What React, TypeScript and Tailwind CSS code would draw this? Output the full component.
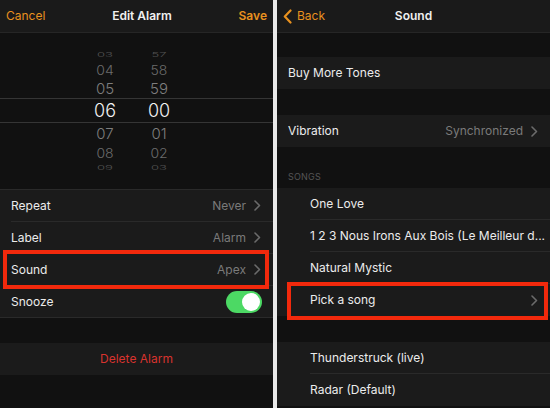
import React from 'react';

const font = { fontFamily: 'Inter, "Noto Sans", sans-serif' };

const Chevron: React.FC<{ color?: string }> = ({ color = '#6b6b6b' }) => (
  <svg width="7" height="11" viewBox="0 0 7 11" className="ml-[8px]">
    <path d="M1 1l4.5 4.5L1 10" fill="none" stroke={color} strokeWidth="1.6" strokeLinecap="round" strokeLinejoin="round" />
  </svg>
);

const Row: React.FC<{
  label: string;
  value?: string;
  chevron?: boolean;
  indent?: string;
  last?: boolean;
  children?: React.ReactNode;
}> = ({ label, value, chevron, indent = 'pl-[11px]', last, children }) => (
  <div className={`relative h-[32px] bg-[#1b1b1b] ${indent}`}>
    <div className={`flex h-full items-center pr-[12px] ${last ? '' : 'border-b border-[#2a2a2a]'}`}>
      <span className="flex-1 whitespace-nowrap text-[12px] text-[#ececec]">{label}</span>
      {value && <span className="text-[12px] text-[#7a7a7a]">{value}</span>}
      {chevron && <Chevron />}
    </div>
    {children}
  </div>
);

const wheel = [
  { h: 'h-[12px]', size: 'text-[13px] scale-y-50', color: 'text-[#525252]', hr: '03', mn: '57' },
  { h: 'h-[19px]', size: 'text-[14px] scale-y-90', color: 'text-[#6c6c6c]', hr: '04', mn: '58' },
  { h: 'h-[19px]', size: 'text-[15px]', color: 'text-[#7e7e7e]', hr: '05', mn: '59' },
  { h: 'h-[25px] border-y border-[#353535]', size: 'text-[18px]', color: 'text-[#f2f2f2]', hr: '06', mn: '00' },
  { h: 'h-[21px]', size: 'text-[15px]', color: 'text-[#7e7e7e]', hr: '07', mn: '01' },
  { h: 'h-[19px]', size: 'text-[14px] scale-y-90', color: 'text-[#6c6c6c]', hr: '08', mn: '02' },
  { h: 'h-[9px]', size: 'text-[13px] scale-y-50', color: 'text-[#525252]', hr: '09', mn: '03' },
];

const EditAlarm: React.FC = () => (
  <div className="flex w-[273px] flex-col bg-[#111111]">
    <div className="flex h-[33px] items-center justify-between border-b border-[#262626] bg-[#1a1a1a] px-[6px]">
      <span className="text-[12px] text-[#e8911f]">Cancel</span>
      <span className="text-[12px] font-semibold text-[#f0f0f0]">Edit Alarm</span>
      <span className="text-[12px] font-semibold text-[#e8911f]">Save</span>
    </div>
    <div className="flex h-[157px] flex-col border-b border-[#2a2a2a] pt-[15px]">
      {wheel.map((w) => (
        <div key={w.hr} className={`flex items-center pl-[85px] ${w.h}`}>
          <span className={`inline-block w-[40px] text-center font-light leading-none ${w.size} ${w.color}`}>{w.hr}</span>
          <span className={`ml-[14px] inline-block w-[40px] text-center font-light leading-none ${w.size} ${w.color}`}>{w.mn}</span>
        </div>
      ))}
    </div>
    <Row label="Repeat" value="Never" chevron />
    <Row label="Label" value="Alarm" chevron />
    <Row label="Sound" value="Apex" chevron>
      <div className="absolute -top-[4px] -bottom-[3px] left-[3px] right-[4px] z-10 border-[4px] border-[#f2290c]" />
    </Row>
    <div className="flex h-[32px] items-center border-b border-[#2a2a2a] bg-[#1b1b1b] pl-[11px] pr-[11px]">
      <span className="flex-1 text-[12px] text-[#ececec]">Snooze</span>
      <div className="flex h-[22px] w-[36px] items-center justify-end rounded-full bg-[#4cd964] p-[2px]">
        <div className="h-[18px] w-[18px] rounded-full bg-white" />
      </div>
    </div>
    <div className="h-[25px]" />
    <div className="flex h-[32px] items-center justify-center bg-[#1b1b1b]">
      <span className="text-[12px] text-[#d8332e]">Delete Alarm</span>
    </div>
    <div className="flex-1" />
  </div>
);

const SoundScreen: React.FC = () => (
  <div className="flex w-[273px] flex-col bg-[#111111]">
    <div className="relative flex h-[33px] items-center justify-center border-b border-[#262626] bg-[#1a1a1a]">
      <div className="absolute left-[6px] flex items-center gap-[5px]">
        <svg width="9" height="15" viewBox="0 0 9 15">
          <path d="M7.5 1.5L1.8 7.5l5.7 6" fill="none" stroke="#e8911f" strokeWidth="2.2" strokeLinecap="round" strokeLinejoin="round" />
        </svg>
        <span className="text-[12px] text-[#e8911f]">Back</span>
      </div>
      <span className="text-[12px] font-semibold text-[#f0f0f0]">Sound</span>
    </div>
    <div className="h-[24px]" />
    <Row label="Buy More Tones" last />
    <div className="h-[26px]" />
    <Row label="Vibration" value="Synchronized" chevron last />
    <div className="flex h-[41px] items-end pb-[5px] pl-[11px]">
      <span className="text-[9px] tracking-wide text-[#555555]">SONGS</span>
    </div>
    <Row label="One Love" indent="pl-[33px]" />
    <Row label="1 2 3 Nous Irons Aux Bois (Le Meilleur d..." indent="pl-[33px]" />
    <Row label="Natural Mystic" indent="pl-[33px]" />
    <Row label="Pick a song" chevron indent="pl-[33px]" last>
      <div className="absolute -top-[2px] -bottom-[4px] left-[10px] right-[2px] z-10 border-[4px] border-[#f2290c]" />
    </Row>
    <div className="h-[26px]" />
    <Row label="Thunderstruck (live)" indent="pl-[33px]" />
    <Row label="Radar (Default)" indent="pl-[33px]" last />
    <div className="flex-1" />
  </div>
);

const App: React.FC = () => (
  <div className="flex h-[408px] w-[550px] overflow-hidden bg-[#e9e9e9]" style={font}>
    <EditAlarm />
    <div className="w-[4px]" />
    <SoundScreen />
  </div>
);

export default App;
